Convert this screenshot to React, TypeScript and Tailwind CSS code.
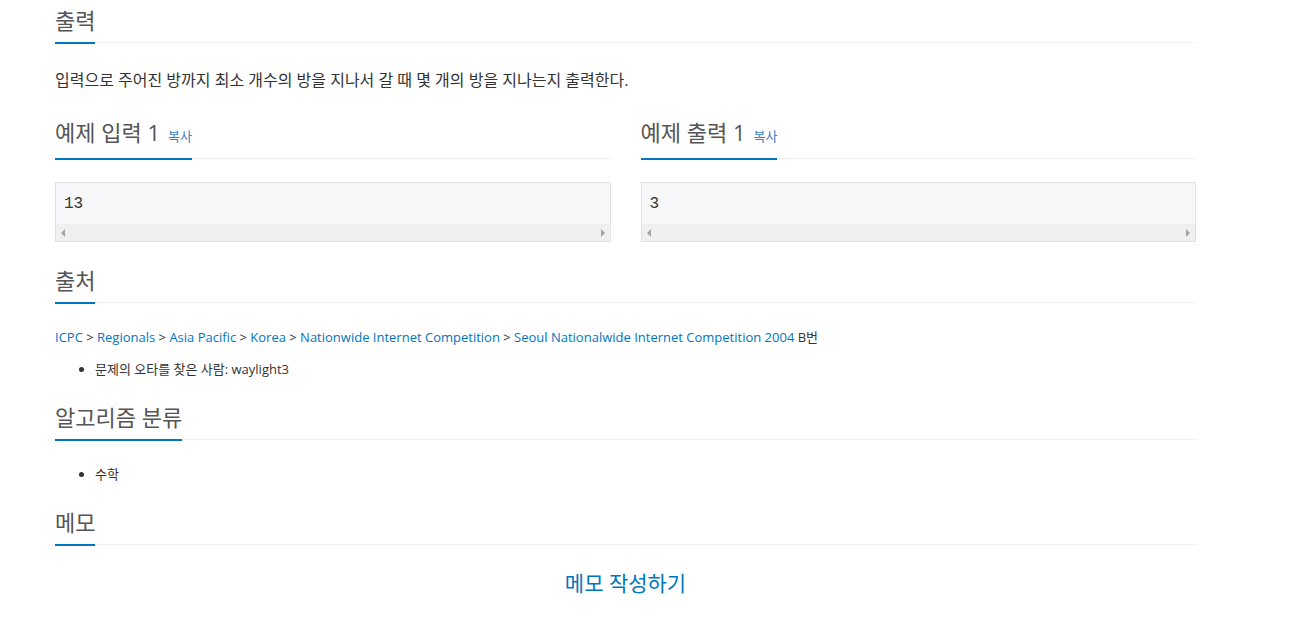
import React from "react";

const FONT = { fontFamily: '"Open Sans", "Noto Sans CJK KR", sans-serif' };

// section title with the blue underline sitting on the dotted rule
const Headline: React.FC<{ title: string; extra?: React.ReactNode; className?: string }> = ({
  title,
  extra,
  className = "",
}) => (
  <div className={"border-b border-dotted border-[#dfe3e8] " + className}>
    <h2 className="inline-block -mb-[2px] border-b-2 border-[#0076c0] pb-[8px] text-[22px] leading-[28px] font-normal text-[#555]">
      {title}
      {extra}
    </h2>
  </div>
);

// sample box with a fake horizontal scrollbar at the bottom
const SampleBox: React.FC<{ value: string }> = ({ value }) => (
  <div className="border border-[#e1e1e8] bg-[#f7f7f9]">
    <div
      className="h-[41px] flex items-center pl-[8px] text-[16px] text-[#333]"
      style={{ fontFamily: '"Liberation Mono", "DejaVu Sans Mono", monospace' }}
    >
      {value}
    </div>
    <div className="h-[17px] bg-[#f0f0f0] flex items-center justify-between px-[5px]">
      <span className="w-0 h-0 border-y-[4px] border-y-transparent border-r-[4px] border-r-[#a3a3a3]" />
      <span className="w-0 h-0 border-y-[4px] border-y-transparent border-l-[4px] border-l-[#a3a3a3]" />
    </div>
  </div>
);

const sourceLinks = [
  "ICPC",
  "Regionals",
  "Asia Pacific",
  "Korea",
  "Nationwide Internet Competition",
  "Seoul Nationalwide Internet Competition 2004",
];

export default function App() {
  return (
    <div className="bg-white min-h-[627px] text-[#333]" style={FONT}>
      <div className="ml-[55px] w-[1141px] pt-[6px] pb-[30px]">
        {/* output */}
        <Headline title="출력" />
        <p className="mt-[25px] text-[16px] leading-[24px]">
          입력으로 주어진 방까지 최소 개수의 방을 지나서 갈 때 몇 개의 방을 지나는지 출력한다.
        </p>

        {/* samples */}
        <div className="grid grid-cols-2 gap-x-[30px] mt-[26px]">
          <div>
            <Headline
              title="예제 입력 1"
              extra={<a className="ml-[8px] text-[13px] text-[#3a7fc4] cursor-pointer">복사</a>}
            />
            <div className="mt-[23px]">
              <SampleBox value="13" />
            </div>
          </div>
          <div>
            <Headline
              title="예제 출력 1"
              extra={<a className="ml-[8px] text-[13px] text-[#3a7fc4] cursor-pointer">복사</a>}
            />
            <div className="mt-[23px]">
              <SampleBox value="3" />
            </div>
          </div>
        </div>

        {/* source */}
        <Headline title="출처" className="mt-[24px]" />
        <p className="mt-[24px] text-[13px] leading-[20px]">
          {sourceLinks.map((l, i) => (
            <React.Fragment key={l}>
              {i > 0 && " > "}
              <a className="text-[#0076c0] cursor-pointer">{l}</a>
            </React.Fragment>
          ))}{" "}
          B번
        </p>
        <ul className="mt-[12px] list-disc pl-[40px] text-[13px] leading-[20px]">
          <li>문제의 오타를 찾은 사람: waylight3</li>
        </ul>

        {/* tags */}
        <Headline title="알고리즘 분류" className="mt-[24px]" />
        <ul className="mt-[24px] list-disc pl-[40px] text-[13px] leading-[20px]">
          <li>수학</li>
        </ul>

        {/* memo */}
        <Headline title="메모" className="mt-[24px]" />
        <div className="mt-[24px] text-center">
          <a className="text-[21px] leading-[28px] text-[#0076c0] cursor-pointer">메모 작성하기</a>
        </div>
      </div>
    </div>
  );
}
